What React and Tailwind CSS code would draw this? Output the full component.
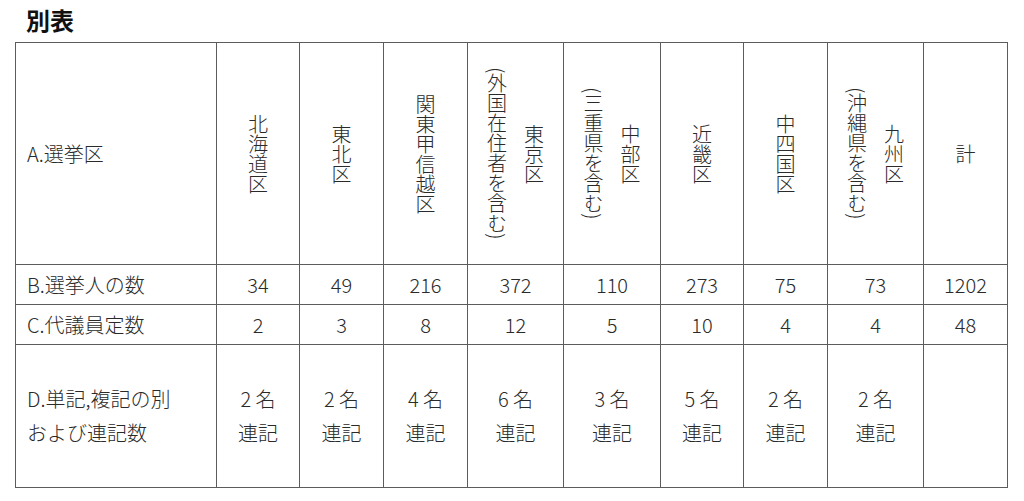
import React from "react";

const regions = [
  { w: 83, lines: ["北海道区"] },
  { w: 84, lines: ["東北区"] },
  { w: 84, lines: ["関東甲信越区"] },
  { w: 96, lines: ["東京区", "(外国在住者を含む)"] },
  { w: 97, lines: ["中部区", "(三重県を含む)"] },
  { w: 83, lines: ["近畿区"] },
  { w: 84, lines: ["中四国区"] },
  { w: 96, lines: ["九州区", "(沖縄県を含む)"] },
];

const voters = [34, 49, 216, 372, 110, 273, 75, 73, 1202];
const seats = [2, 3, 8, 12, 5, 10, 4, 4, 48];
const renki = [2, 2, 4, 6, 3, 5, 2, 2];

const cell = "border border-[#5c5c5c] p-0";

function VerticalLabel({ lines }) {
  return (
    <div className="flex h-[221px] items-center justify-center">
      <div className="h-[221px] text-center leading-[37px] [writing-mode:vertical-rl]">
        {lines.map((line, i) => (
          <div key={i}>{line}</div>
        ))}
      </div>
    </div>
  );
}

export default function App() {
  return (
    <div className="h-[501px] w-[1024px] bg-white font-['Noto_Sans_CJK_JP',sans-serif] text-[#2a2a2a]">
      <div className="h-[42px] pl-[26px] pt-[5px] text-[24px] font-bold leading-[30px] text-[#111]">
        別表
      </div>
      <table className="ml-[15px] w-[993px] table-fixed border-collapse text-[20px] font-light">
        <colgroup>
          <col className="w-[201px]" />
          {regions.map((r, i) => (
            <col key={i} style={{ width: r.w }} />
          ))}
          <col className="w-[84px]" />
        </colgroup>
        <tbody>
          <tr className="h-[222px]">
            <td className={`${cell} pl-[11px]`}>A.選挙区</td>
            {regions.map((r, i) => (
              <td key={i} className={cell}>
                <VerticalLabel lines={r.lines} />
              </td>
            ))}
            <td className={`${cell} text-center`}>計</td>
          </tr>
          <tr className="h-[40px]">
            <td className={`${cell} pl-[11px]`}>B.選挙人の数</td>
            {voters.map((v, i) => (
              <td key={i} className={`${cell} text-center`}>
                {v}
              </td>
            ))}
          </tr>
          <tr className="h-[40px]">
            <td className={`${cell} pl-[11px]`}>C.代議員定数</td>
            {seats.map((v, i) => (
              <td key={i} className={`${cell} text-center`}>
                {v}
              </td>
            ))}
          </tr>
          <tr className="h-[143px]">
            <td className={`${cell} pl-[11px] leading-[34px]`}>
              <div>D.単記,複記の別</div>
              <div>および連記数</div>
            </td>
            {renki.map((v, i) => (
              <td key={i} className={`${cell} text-center leading-[34px]`}>
                <div>{v} 名</div>
                <div>連記</div>
              </td>
            ))}
            <td className={cell}></td>
          </tr>
        </tbody>
      </table>
    </div>
  );
}
